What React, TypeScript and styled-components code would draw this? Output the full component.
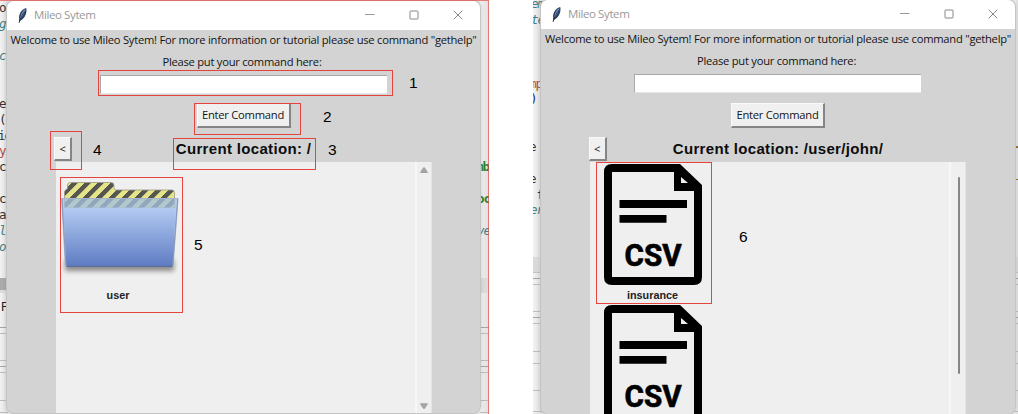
import React from "react";
import styled, { createGlobalStyle } from "styled-components";

const Global = createGlobalStyle`
  * { box-sizing: border-box; }
  body { margin: 0; background: #fff; overflow: hidden; }
`;

const Page = styled.main`
  position: relative;
  display: flex;
  gap: 44px;
  width: 1018px;
  height: 414px;
  overflow: hidden;
  font-family: "Open Sans", "Noto Sans", sans-serif;
`;

const Desktop = styled.section<{ $w: number }>`
  position: relative;
  width: ${(p) => p.$w}px;
  height: 414px;
  overflow: hidden;
  display: flex;
  justify-content: space-between;
  background: #ececec;
`;

const Edge = styled.div<{ $w: number }>`
  width: ${(p) => p.$w}px;
  overflow: hidden;
  background: linear-gradient(90deg, #f2f2f2, #dedede);
`;

const CodeBlock = styled.div<{ $up?: number }>`
  margin-top: ${(p) => -(p.$up ?? 0)}px;
`;

const CodeLine = styled.div<{ $c?: string; $i?: boolean; $b?: boolean; $h: number; $dx?: number }>`
  height: ${(p) => p.$h}px;
  line-height: ${(p) => p.$h + 1}px;
  margin-left: ${(p) => p.$dx ?? -1}px;
  font-family: "DejaVu Sans Mono", monospace;
  font-size: 12.5px;
  letter-spacing: -1px;
  white-space: pre;
  color: ${(p) => p.$c ?? "#333"};
  font-style: ${(p) => (p.$i ? "italic" : "normal")};
  font-weight: ${(p) => (p.$b ? 700 : 400)};
`;

const Band = styled.div<{ $h: number; $bg?: string; $line?: string }>`
  height: ${(p) => p.$h}px;
  background: ${(p) => p.$bg ?? "transparent"};
  border-bottom: ${(p) => (p.$line ? `1px solid ${p.$line}` : "none")};
  font: 12.5px/${(p) => p.$h + 5}px "Liberation Sans", sans-serif;
  color: #222;
  padding-left: 1px;
`;

const Frame = styled.div<{ $x: number; $y: number; $w: number; $h: number }>`
  position: absolute;
  left: ${(p) => p.$x}px;
  top: ${(p) => p.$y}px;
  width: ${(p) => p.$w}px;
  height: ${(p) => p.$h}px;
  display: flex;
  flex-direction: column;
  align-items: center;
  border-radius: 7px;
  overflow: hidden;
  background: #d3d3d3;
  box-shadow: 0 0 0 1px #c4c4c4, 0 0 5px rgba(0, 0, 0, 0.18);
`;

const TitleBar = styled.header`
  width: 100%;
  height: 29px;
  flex: none;
  display: flex;
  align-items: center;
  background: #fff;
  padding: 0 17px 1px 10px;
`;

const Title = styled.span`
  flex: 1;
  margin-left: 6px;
  font-size: 11.5px;
  letter-spacing: -0.4px;
  line-height: 16px;
  color: #999;
`;

const Controls = styled.div`
  display: flex;
  align-items: center;
  gap: 34px;
`;

const Label = styled.div<{ $h: number; $left?: number; $drop?: number }>`
  height: ${(p) => p.$h}px;
  line-height: ${(p) => p.$h + (p.$drop ?? 0)}px;
  flex: none;
  margin-right: ${(p) => p.$left ?? 0}px;
  font-size: 11.2px;
  letter-spacing: -0.25px;
  white-space: nowrap;
  color: #141414;
`;

const Entry = styled.div<{ $after: number }>`
  width: 287px;
  height: 19px;
  flex: none;
  margin: 3px 1px ${(p) => p.$after}px 0;
  background: #fff;
  border-top: 1px solid #a8a8a8;
  border-left: 1px solid #a8a8a8;
  border-bottom: 1px solid #e6e6e6;
`;

const Raised = styled.button<{ $w: number; $h: number }>`
  width: ${(p) => p.$w}px;
  height: ${(p) => p.$h}px;
  flex: none;
  padding: 0;
  border: solid;
  border-width: 1px 2px 2px 1px;
  border-color: #fafafa #858585 #858585 #fafafa;
  background: #f0f0f0;
  font-family: "Open Sans", "Noto Sans", sans-serif;
  font-size: 11.2px;
  letter-spacing: -0.25px;
  line-height: 1;
  white-space: nowrap;
  color: #141414;
`;

const Location = styled.div`
  width: 379px;
  height: 34px;
  flex: none;
  display: flex;
  align-items: center;
  padding-top: 8px;
`;

const Heading = styled.h1`
  flex: 1;
  margin: 0 18px 1px 0;
  text-align: center;
  font: 700 15px/24px "Liberation Sans", sans-serif;
  letter-spacing: 0.33px;
  color: #0c0c0c;
  white-space: nowrap;
`;

const Listing = styled.div`
  width: 376px;
  flex: 1;
  min-height: 0;
  display: flex;
  justify-content: space-between;
  overflow: hidden;
  background: #efefef;
  border-right: 1px solid #e4e4e4;
`;

const Files = styled.div`
  display: flex;
  flex-direction: column;
`;

const Tile = styled.div<{ $pad: number }>`
  width: 125px;
  height: 141px;
  flex: none;
  display: flex;
  flex-direction: column;
  align-items: center;
  padding-top: ${(p) => p.$pad}px;
  font: 700 10.8px/14px "Liberation Sans", sans-serif;
  color: #222;
  svg { display: block; flex: none; }
`;

const FileName = styled.span<{ $gap: number }>`
  margin-top: ${(p) => p.$gap}px;
`;

const Track = styled.div<{ $thumb?: boolean }>`
  width: 16px;
  border-left: 2px solid #f7f7f7;
  display: flex;
  flex-direction: column;
  align-items: center;
  justify-content: ${(p) => (p.$thumb ? "flex-start" : "space-between")};
  padding: ${(p) => (p.$thumb ? "15px 0 0 1px" : "4px 0 3px")};
`;

const Thumb = styled.div`
  width: 2px;
  height: 197px;
  border-radius: 1px;
  background: #858585;
`;

const Mark = styled.div<{ $x: number; $y: number; $w: number; $h: number; $faint?: boolean }>`
  position: absolute;
  left: ${(p) => p.$x}px;
  top: ${(p) => p.$y}px;
  width: ${(p) => p.$w}px;
  height: ${(p) => p.$h}px;
  border: 1px solid #e5433d;
  opacity: ${(p) => (p.$faint ? 0.65 : 1)};
`;

const Num = styled.span<{ $x: number; $y: number }>`
  position: absolute;
  left: ${(p) => p.$x}px;
  top: ${(p) => p.$y}px;
  font: 15.5px/18px "Liberation Sans", sans-serif;
  color: #000;
`;

const Feather = () => (
  <svg width="11" height="17" viewBox="0 0 11 17">
    <path d="M2 15.600 2.200 12C1.400 8 4 2.500 9.200 1c.9 3-.2 8-3.400 11L3.600 13.400Z" fill="#2b3f60" />
    <path d="M3.400 10.500C4 7 5.800 3.600 8.600 2 7.600 5 6 8 3.600 12Z" fill="#7fa6dc" />
    <path d="M1.900 16C3.400 11.500 5.200 7.500 7.400 4.500" stroke="#1b2230" strokeWidth=".7" fill="none" />
  </svg>
);

const WindowButtons = () => (
  <Controls>
    <svg width="10" height="10" viewBox="0 0 10 10" stroke="#999"><path d="M0 4.500H9.500" /></svg>
    <svg width="10" height="10" viewBox="0 0 10 10" stroke="#888" fill="none"><rect x="1" y="1" width="8" height="8" rx=".5" /></svg>
    <svg width="10" height="10" viewBox="0 0 10 10" stroke="#888"><path d="M.7.7l8.600 8.600M9.300.7.7 9.300" /></svg>
  </Controls>
);

const Folder = () => (
  <svg width="125" height="108" viewBox="56 176 125 108">
    <defs>
      <pattern id="hazard" width="13" height="30" patternUnits="userSpaceOnUse" patternTransform="translate(69 198.500) skewX(-45)">
        <rect width="13" height="30" fill="#e6e489" />
        <rect width="6.300" height="30" fill="#55564f" />
      </pattern>
      <linearGradient id="front" x1="0" x2="0" y1="0" y2="1">
        <stop offset="0" stopColor="#b3cbf2" />
        <stop offset="1" stopColor="#5f7cc3" />
      </linearGradient>
      <filter id="soft" x="-20%" y="-100%" width="140%" height="300%"><feGaussianBlur stdDeviation="2.600" /></filter>
    </defs>
    <rect x="65" y="260" width="109" height="11" fill="#555" opacity=".65" filter="url(#soft)" />
    <path d="M64.500 208V192q0-2 3-3.500V185q0-2.500 3-2.500H111q3 0 3 3v2.500q0 2 2 2H172q2.500 0 2.500 3v15Z" fill="url(#hazard)" stroke="#9a9a85" strokeWidth=".8" />
    <path d="M61.700 198.500H178L173.200 264.500q-.2 2-2.200 2H67.500q-2 0-2.200-2Z" fill="#a2bfe0" fillOpacity=".77" stroke="#a4b4cc" strokeWidth="1" />
    <path d="M63.500 207.700H175.600L173 266H66.300Z" fill="url(#front)" />
    <path d="M62 199 66 265q.2 1.500 1.800 1.500H170.700q1.700 0 1.900-1.500L177.700 199" fill="none" stroke="#8494b8" strokeWidth=".9" />
    <path d="M66.500 266.300H172.500" stroke="#53658f" strokeWidth="1" />
  </svg>
);

const CsvFile = () => (
  <svg width="98" height="121" viewBox="0 0 98 121">
    <path fillRule="evenodd" d="M8 0H76L98 21V113q0 8-8 8H8q-8 0-8-8V8Q0 0 8 0ZM8 8V113H90V27H70V8ZM77 13V19H84Z" fill="#000" />
    <path d="M15.500 36H83v8H15.500ZM15.500 51H62.500v7.700H15.500Z" fill="#000" />
    <text x="20.500" y="101.800" fontFamily="Roboto" fontWeight="700" fontSize="30.500" textLength="57" lengthAdjust="spacingAndGlyphs" stroke="#000" strokeWidth=".7">CSV</text>
  </svg>
);

const Arrow = ({ down }: { down?: boolean }) => (
  <svg width="10" height="8" viewBox="0 0 10 8">
    <path d={down ? "M1.500 1.800H8.500L5.500 6.500H4.500Z" : "M1.500 6.500H8.500L5.500 1.800H4.500Z"} fill="#a3a3a3" stroke="#a3a3a3" strokeLinejoin="round" />
  </svg>
);

type WinProps = { x: number; y: number; w: number; h: number; path: string; after: number; children: React.ReactNode };

const MileoWindow = ({ x, y, w, h, path, after, children }: WinProps) => (
  <Frame $x={x} $y={y} $w={w} $h={h}>
    <TitleBar>
      <Feather />
      <Title>Mileo Sytem</Title>
      <WindowButtons />
    </TitleBar>
    <Label $h={20}>Welcome to use Mileo Sytem! For more information or tutorial please use command "gethelp"</Label>
    <Label $h={22} $left={3} $drop={1}>Please put your command here:</Label>
    <Entry $after={after} />
    <Raised $w={94} $h={25}>Enter Command</Raised>
    <Location>
      <Raised $w={18} $h={24}>&lt;</Raised>
      <Heading>Current location: {path}</Heading>
    </Location>
    <Listing>{children}</Listing>
  </Frame>
);

type Code = { t: string; c?: string; i?: boolean; b?: boolean; dx?: number };
const TEAL = "#3d8288";
const blank: Code = { t: "" };

const CodeColumn = ({ lines, h, up }: { lines: Code[]; h: number; up?: number }) => (
  <CodeBlock $up={up}>
    {lines.map((l, n) => (
      <CodeLine key={n} $h={h} $c={l.c} $i={l.i} $b={l.b} $dx={l.dx}>{l.t}</CodeLine>
    ))}
  </CodeBlock>
);

const leftCode: Code[] = [
  { t: "or" }, { t: "ge", c: TEAL, i: true }, blank, { t: "co", c: TEAL, i: true }, blank, blank,
  { t: "e" }, { t: "(f" }, { t: "io", dx: -2 }, { t: "yp", c: "#b04a4a" }, { t: "cr" }, blank,
  { t: "cr" }, { t: "al" }, { t: "l", c: TEAL, i: true }, { t: "on", c: TEAL, i: true },
];
const leftTail: Code[] = [
  ...Array(10).fill(blank), { t: "mb", c: "#2c852c", b: true, dx: -4 }, blank,
  { t: "oc", c: "#2c852c", b: true, dx: -3 }, blank, { t: "ve", c: TEAL, i: true, dx: -3 }, blank,
];
const rightCode: Code[] = [
  { t: "em", c: TEAL, i: true, dx: -2 }, { t: "te", c: TEAL, i: true, dx: -2 }, blank, blank, blank,
  { t: "mp", c: "#b04a4a", dx: -4 }, { t: ")", c: "#1a2a80", dx: -3 }, blank, blank, { t: "e", dx: -4 }, blank,
  { t: "e", dx: -4 }, { t: " f", dx: -3 }, { t: "er", c: TEAL, i: true, dx: -3 }, blank, blank,
];
const rightTail: Code[] = [
  ...Array(9).fill(blank), { t: "-", c: "#8a6a2a", b: true }, blank, { t: "-", c: "#8a7a2a" }, ...Array(4).fill(blank),
];

const StatusBands = ({ thumb, text }: { thumb: string; text?: string }) => (
  <>
    <Band $h={23} />
    <Band $h={12} $bg={thumb} />
    <Band $h={3} $bg="#dcdcdc" />
    <Band $h={24}>{text}</Band>
    <Band $h={11} $line="#a5a5a5" />
    <Band $h={6} $line="#bcbcbc" />
    <Band $h={27} $line="#bcbcbc" />
    <Band $h={6} $line="#a5a5a5" />
    <Band $h={6} $line="#bcbcbc" />
    <Band $h={28} $line="#bcbcbc" />
    <Band $h={12} $line="#bcbcbc" />
  </>
);

const RightBands = () => (
  <>
    <Band $h={7} />
    <Band $h={16} $bg="#dadada" $line="#c4c4c4" />
    <Band $h={6} $line="#a5a5a5" />
    <Band $h={6} $line="#bcbcbc" />
    <Band $h={27} $line="#bcbcbc" />
    <Band $h={6} $line="#a5a5a5" />
    <Band $h={6} $line="#bcbcbc" />
    <Band $h={28} $line="#bcbcbc" />
    <Band $h={12} $line="#bcbcbc" />
    <Band $h={27} $line="#bcbcbc" />
    <Band $h={21} $line="#bcbcbc" />
  </>
);

export default function App() {
  return (
    <Page>
      <Global />
      <Desktop $w={489}>
        <Edge $w={8}>
          <CodeColumn lines={leftCode} h={15.95} />
          <StatusBands thumb="#ababab" text="F" />
        </Edge>
        <Edge $w={9}>
          <CodeColumn lines={leftTail} h={15.95} />
          <StatusBands thumb="#dadada" />
        </Edge>
        <MileoWindow x={7} y={1} w={473} h={412} path="/" after={9}>
          <Files>
            <Tile $pad={14}>
              <Folder />
              <FileName $gap={4}>user</FileName>
            </Tile>
          </Files>
          <Track>
            <Arrow />
            <Arrow down />
          </Track>
        </MileoWindow>
      </Desktop>
      <Desktop $w={485}>
        <Edge $w={9}>
          <CodeColumn lines={rightCode} h={15.85} up={3.6} />
          <RightBands />
        </Edge>
        <Edge $w={4}>
          <CodeColumn lines={rightTail} h={15.85} up={3.6} />
          <RightBands />
        </Edge>
        <MileoWindow x={8} y={0} w={474} h={414} path="/user/john/" after={10}>
          <Files>
            <Tile $pad={2}>
              <CsvFile />
              <FileName $gap={3}>insurance</FileName>
            </Tile>
            <Tile $pad={2}>
              <CsvFile />
            </Tile>
          </Files>
          <Track $thumb>
            <Thumb />
          </Track>
        </MileoWindow>
      </Desktop>
      <Mark $x={-2} $y={0} $w={491} $h={418} $faint />
      <Mark $x={98} $y={70} $w={295} $h={26} />
      <Mark $x={194} $y={103} $w={107} $h={32} />
      <Mark $x={173} $y={138} $w={143} $h={32} />
      <Mark $x={50} $y={131} $w={32} $h={39} />
      <Mark $x={60} $y={177} $w={123} $h={136} />
      <Mark $x={596} $y={162} $w={116} $h={142} />
      <Num $x={409} $y={74}>1</Num>
      <Num $x={323} $y={108}>2</Num>
      <Num $x={328} $y={141}>3</Num>
      <Num $x={93} $y={141}>4</Num>
      <Num $x={194} $y={236}>5</Num>
      <Num $x={739} $y={228}>6</Num>
    </Page>
  );
}
